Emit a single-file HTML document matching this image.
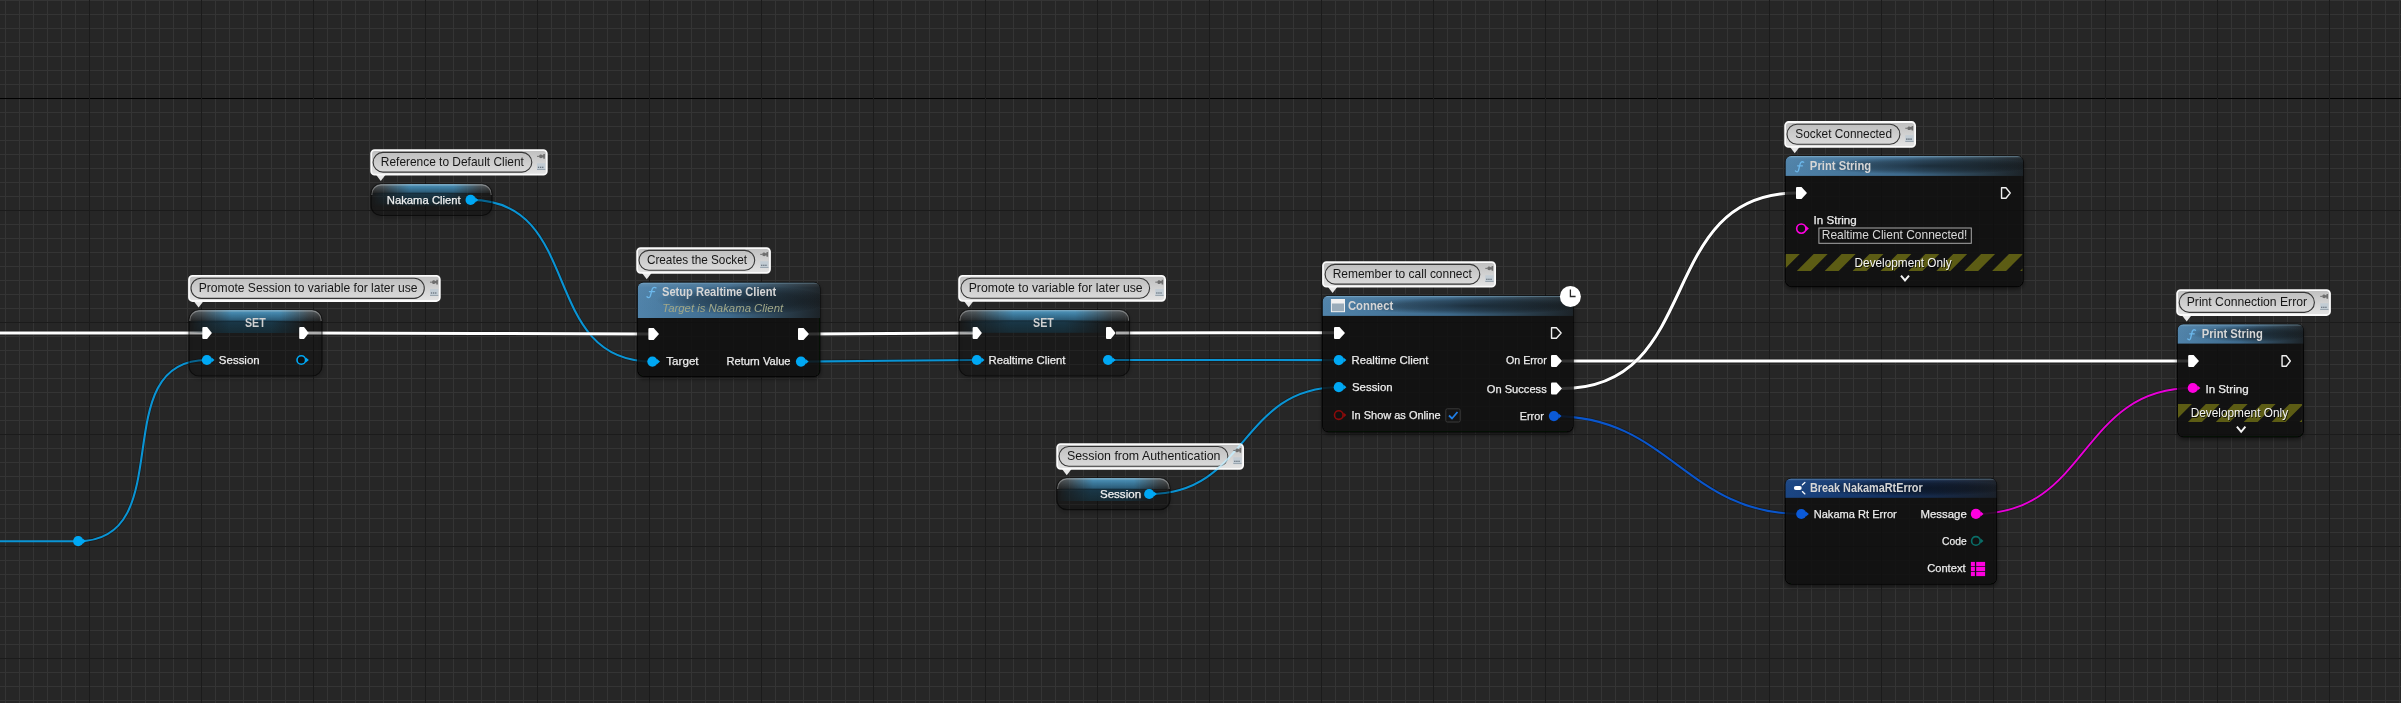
<!DOCTYPE html>
<html><head><meta charset="utf-8"><title>Blueprint</title>
<style>html,body{margin:0;padding:0;background:#262626;overflow:hidden;width:2401px;height:703px}
svg{display:block;font-family:"Liberation Sans",sans-serif;will-change:transform}</style></head>
<body><svg width="2401" height="703" viewBox="0 0 2401 703"><defs>
<linearGradient id="bubG" x1="0" y1="0" x2="0" y2="1">
 <stop offset="0" stop-color="#bfbfbf"/><stop offset="1" stop-color="#e4e4e4"/>
</linearGradient>
<linearGradient id="pillG" x1="0" y1="0" x2="0" y2="1">
 <stop offset="0" stop-color="#c0c0c0"/><stop offset="1" stop-color="#dadada"/>
</linearGradient>
<linearGradient id="funcH" x1="0" y1="0" x2="1" y2="0">
 <stop offset="0" stop-color="#5083aa"/><stop offset="0.5" stop-color="#3e6a8c"/><stop offset="0.8" stop-color="#2a3f4e"/><stop offset="1" stop-color="#1c2328"/>
</linearGradient>
<linearGradient id="funcV" x1="0" y1="0" x2="0" y2="1">
 <stop offset="0" stop-color="#ffffff" stop-opacity="0.12"/><stop offset="0.15" stop-color="#ffffff" stop-opacity="0.02"/><stop offset="1" stop-color="#000000" stop-opacity="0"/>
</linearGradient>
<radialGradient id="funcBlob" cx="0.55" cy="0.5" r="0.5">
 <stop offset="0" stop-color="#000000" stop-opacity="0.5"/><stop offset="0.6" stop-color="#000000" stop-opacity="0.3"/><stop offset="1" stop-color="#000000" stop-opacity="0"/>
</radialGradient>
<linearGradient id="breakH" x1="0" y1="0" x2="1" y2="0">
 <stop offset="0" stop-color="#1b4684"/><stop offset="0.5" stop-color="#13305f"/><stop offset="1" stop-color="#1a2029"/>
</linearGradient>
<radialGradient id="varGlow" cx="0.5" cy="0" r="0.5" gradientTransform="translate(0,0) scale(1,1)">
 <stop offset="0" stop-color="#4aa3d6" stop-opacity="0.95"/><stop offset="0.6" stop-color="#2a6f98" stop-opacity="0.6"/><stop offset="1" stop-color="#1a3a50" stop-opacity="0"/>
</radialGradient>
<linearGradient id="glossV" x1="0" y1="0" x2="0" y2="1">
 <stop offset="0" stop-color="#ffffff" stop-opacity="0.28"/><stop offset="1" stop-color="#ffffff" stop-opacity="0.04"/>
</linearGradient>
<linearGradient id="varBright" x1="0" y1="0" x2="0" y2="1">
 <stop offset="0" stop-color="#52a6d4"/><stop offset="0.5" stop-color="#3a82ab"/><stop offset="1" stop-color="#2a5f7e"/>
</linearGradient>
<linearGradient id="varDark" x1="0" y1="0" x2="0" y2="1">
 <stop offset="0" stop-color="#1a3a4c" stop-opacity="0.95"/><stop offset="1" stop-color="#16303c" stop-opacity="0.8"/>
</linearGradient>
<linearGradient id="varDarkFade" x1="0" y1="0" x2="0" y2="1">
 <stop offset="0" stop-color="#1a3a4c" stop-opacity="0.95"/><stop offset="0.7" stop-color="#16303c" stop-opacity="0.7"/><stop offset="1" stop-color="#16303c" stop-opacity="0"/>
</linearGradient>
<linearGradient id="hmaskA" x1="0" y1="0" x2="1" y2="0">
 <stop offset="0" stop-color="#000"/><stop offset="0.1" stop-color="#222"/><stop offset="0.32" stop-color="#eee"/><stop offset="0.68" stop-color="#eee"/><stop offset="0.9" stop-color="#222"/><stop offset="1" stop-color="#000"/>
</linearGradient>
<linearGradient id="hmaskB" x1="0" y1="0" x2="1" y2="0">
 <stop offset="0" stop-color="#000"/><stop offset="0.08" stop-color="#555"/><stop offset="0.3" stop-color="#fff"/><stop offset="0.62" stop-color="#fff"/><stop offset="0.88" stop-color="#000"/><stop offset="1" stop-color="#000"/>
</linearGradient>
<pattern id="stripes" patternUnits="userSpaceOnUse" width="27.9" height="27.9" patternTransform="skewX(-45)">
 <rect x="0" y="0" width="14" height="27.9" fill="#5b5b12"/>
</pattern>
<filter id="shadow" x="-10%" y="-20%" width="120%" height="150%">
 <feGaussianBlur in="SourceAlpha" stdDeviation="2"/><feOffset dx="0" dy="1.5"/>
 <feComponentTransfer><feFuncA type="linear" slope="0.6"/></feComponentTransfer>
 <feMerge><feMergeNode/><feMergeNode in="SourceGraphic"/></feMerge>
</filter>
</defs>
<rect x="0" y="0" width="2401" height="703" fill="#262626"/>
<g shape-rendering="crispEdges"><rect x="0" y="0" width="2401" height="1" fill="#343434"/><rect x="0" y="14" width="2401" height="1" fill="#343434"/><rect x="0" y="28" width="2401" height="1" fill="#343434"/><rect x="0" y="42" width="2401" height="1" fill="#343434"/><rect x="0" y="56" width="2401" height="1" fill="#343434"/><rect x="0" y="70" width="2401" height="1" fill="#343434"/><rect x="0" y="84" width="2401" height="1" fill="#343434"/><rect x="0" y="98" width="2401" height="1" fill="#343434"/><rect x="0" y="112" width="2401" height="1" fill="#343434"/><rect x="0" y="126" width="2401" height="1" fill="#343434"/><rect x="0" y="140" width="2401" height="1" fill="#343434"/><rect x="0" y="154" width="2401" height="1" fill="#343434"/><rect x="0" y="168" width="2401" height="1" fill="#343434"/><rect x="0" y="182" width="2401" height="1" fill="#343434"/><rect x="0" y="196" width="2401" height="1" fill="#343434"/><rect x="0" y="210" width="2401" height="1" fill="#343434"/><rect x="0" y="224" width="2401" height="1" fill="#343434"/><rect x="0" y="238" width="2401" height="1" fill="#343434"/><rect x="0" y="252" width="2401" height="1" fill="#343434"/><rect x="0" y="266" width="2401" height="1" fill="#343434"/><rect x="0" y="280" width="2401" height="1" fill="#343434"/><rect x="0" y="294" width="2401" height="1" fill="#343434"/><rect x="0" y="308" width="2401" height="1" fill="#343434"/><rect x="0" y="322" width="2401" height="1" fill="#343434"/><rect x="0" y="336" width="2401" height="1" fill="#343434"/><rect x="0" y="350" width="2401" height="1" fill="#343434"/><rect x="0" y="364" width="2401" height="1" fill="#343434"/><rect x="0" y="378" width="2401" height="1" fill="#343434"/><rect x="0" y="392" width="2401" height="1" fill="#343434"/><rect x="0" y="406" width="2401" height="1" fill="#343434"/><rect x="0" y="420" width="2401" height="1" fill="#343434"/><rect x="0" y="434" width="2401" height="1" fill="#343434"/><rect x="0" y="448" width="2401" height="1" fill="#343434"/><rect x="0" y="462" width="2401" height="1" fill="#343434"/><rect x="0" y="476" width="2401" height="1" fill="#343434"/><rect x="0" y="490" width="2401" height="1" fill="#343434"/><rect x="0" y="504" width="2401" height="1" fill="#343434"/><rect x="0" y="518" width="2401" height="1" fill="#343434"/><rect x="0" y="532" width="2401" height="1" fill="#343434"/><rect x="0" y="546" width="2401" height="1" fill="#343434"/><rect x="0" y="560" width="2401" height="1" fill="#343434"/><rect x="0" y="574" width="2401" height="1" fill="#343434"/><rect x="0" y="588" width="2401" height="1" fill="#343434"/><rect x="0" y="602" width="2401" height="1" fill="#343434"/><rect x="0" y="616" width="2401" height="1" fill="#343434"/><rect x="0" y="630" width="2401" height="1" fill="#343434"/><rect x="0" y="644" width="2401" height="1" fill="#343434"/><rect x="0" y="658" width="2401" height="1" fill="#343434"/><rect x="0" y="672" width="2401" height="1" fill="#343434"/><rect x="0" y="686" width="2401" height="1" fill="#343434"/><rect x="0" y="700" width="2401" height="1" fill="#343434"/><rect x="5" y="0" width="1" height="703" fill="#343434"/><rect x="19" y="0" width="1" height="703" fill="#343434"/><rect x="33" y="0" width="1" height="703" fill="#343434"/><rect x="47" y="0" width="1" height="703" fill="#343434"/><rect x="61" y="0" width="1" height="703" fill="#343434"/><rect x="75" y="0" width="1" height="703" fill="#343434"/><rect x="89" y="0" width="1" height="703" fill="#343434"/><rect x="103" y="0" width="1" height="703" fill="#343434"/><rect x="117" y="0" width="1" height="703" fill="#343434"/><rect x="131" y="0" width="1" height="703" fill="#343434"/><rect x="145" y="0" width="1" height="703" fill="#343434"/><rect x="159" y="0" width="1" height="703" fill="#343434"/><rect x="173" y="0" width="1" height="703" fill="#343434"/><rect x="187" y="0" width="1" height="703" fill="#343434"/><rect x="201" y="0" width="1" height="703" fill="#343434"/><rect x="215" y="0" width="1" height="703" fill="#343434"/><rect x="229" y="0" width="1" height="703" fill="#343434"/><rect x="243" y="0" width="1" height="703" fill="#343434"/><rect x="257" y="0" width="1" height="703" fill="#343434"/><rect x="271" y="0" width="1" height="703" fill="#343434"/><rect x="285" y="0" width="1" height="703" fill="#343434"/><rect x="299" y="0" width="1" height="703" fill="#343434"/><rect x="313" y="0" width="1" height="703" fill="#343434"/><rect x="327" y="0" width="1" height="703" fill="#343434"/><rect x="341" y="0" width="1" height="703" fill="#343434"/><rect x="355" y="0" width="1" height="703" fill="#343434"/><rect x="369" y="0" width="1" height="703" fill="#343434"/><rect x="383" y="0" width="1" height="703" fill="#343434"/><rect x="397" y="0" width="1" height="703" fill="#343434"/><rect x="411" y="0" width="1" height="703" fill="#343434"/><rect x="425" y="0" width="1" height="703" fill="#343434"/><rect x="439" y="0" width="1" height="703" fill="#343434"/><rect x="453" y="0" width="1" height="703" fill="#343434"/><rect x="467" y="0" width="1" height="703" fill="#343434"/><rect x="481" y="0" width="1" height="703" fill="#343434"/><rect x="495" y="0" width="1" height="703" fill="#343434"/><rect x="509" y="0" width="1" height="703" fill="#343434"/><rect x="523" y="0" width="1" height="703" fill="#343434"/><rect x="537" y="0" width="1" height="703" fill="#343434"/><rect x="551" y="0" width="1" height="703" fill="#343434"/><rect x="565" y="0" width="1" height="703" fill="#343434"/><rect x="579" y="0" width="1" height="703" fill="#343434"/><rect x="593" y="0" width="1" height="703" fill="#343434"/><rect x="607" y="0" width="1" height="703" fill="#343434"/><rect x="621" y="0" width="1" height="703" fill="#343434"/><rect x="635" y="0" width="1" height="703" fill="#343434"/><rect x="649" y="0" width="1" height="703" fill="#343434"/><rect x="663" y="0" width="1" height="703" fill="#343434"/><rect x="677" y="0" width="1" height="703" fill="#343434"/><rect x="691" y="0" width="1" height="703" fill="#343434"/><rect x="705" y="0" width="1" height="703" fill="#343434"/><rect x="719" y="0" width="1" height="703" fill="#343434"/><rect x="733" y="0" width="1" height="703" fill="#343434"/><rect x="747" y="0" width="1" height="703" fill="#343434"/><rect x="761" y="0" width="1" height="703" fill="#343434"/><rect x="775" y="0" width="1" height="703" fill="#343434"/><rect x="789" y="0" width="1" height="703" fill="#343434"/><rect x="803" y="0" width="1" height="703" fill="#343434"/><rect x="817" y="0" width="1" height="703" fill="#343434"/><rect x="831" y="0" width="1" height="703" fill="#343434"/><rect x="845" y="0" width="1" height="703" fill="#343434"/><rect x="859" y="0" width="1" height="703" fill="#343434"/><rect x="873" y="0" width="1" height="703" fill="#343434"/><rect x="887" y="0" width="1" height="703" fill="#343434"/><rect x="901" y="0" width="1" height="703" fill="#343434"/><rect x="915" y="0" width="1" height="703" fill="#343434"/><rect x="929" y="0" width="1" height="703" fill="#343434"/><rect x="943" y="0" width="1" height="703" fill="#343434"/><rect x="957" y="0" width="1" height="703" fill="#343434"/><rect x="971" y="0" width="1" height="703" fill="#343434"/><rect x="985" y="0" width="1" height="703" fill="#343434"/><rect x="999" y="0" width="1" height="703" fill="#343434"/><rect x="1013" y="0" width="1" height="703" fill="#343434"/><rect x="1027" y="0" width="1" height="703" fill="#343434"/><rect x="1041" y="0" width="1" height="703" fill="#343434"/><rect x="1055" y="0" width="1" height="703" fill="#343434"/><rect x="1069" y="0" width="1" height="703" fill="#343434"/><rect x="1083" y="0" width="1" height="703" fill="#343434"/><rect x="1097" y="0" width="1" height="703" fill="#343434"/><rect x="1111" y="0" width="1" height="703" fill="#343434"/><rect x="1125" y="0" width="1" height="703" fill="#343434"/><rect x="1139" y="0" width="1" height="703" fill="#343434"/><rect x="1153" y="0" width="1" height="703" fill="#343434"/><rect x="1167" y="0" width="1" height="703" fill="#343434"/><rect x="1181" y="0" width="1" height="703" fill="#343434"/><rect x="1195" y="0" width="1" height="703" fill="#343434"/><rect x="1209" y="0" width="1" height="703" fill="#343434"/><rect x="1223" y="0" width="1" height="703" fill="#343434"/><rect x="1237" y="0" width="1" height="703" fill="#343434"/><rect x="1251" y="0" width="1" height="703" fill="#343434"/><rect x="1265" y="0" width="1" height="703" fill="#343434"/><rect x="1279" y="0" width="1" height="703" fill="#343434"/><rect x="1293" y="0" width="1" height="703" fill="#343434"/><rect x="1307" y="0" width="1" height="703" fill="#343434"/><rect x="1321" y="0" width="1" height="703" fill="#343434"/><rect x="1335" y="0" width="1" height="703" fill="#343434"/><rect x="1349" y="0" width="1" height="703" fill="#343434"/><rect x="1363" y="0" width="1" height="703" fill="#343434"/><rect x="1377" y="0" width="1" height="703" fill="#343434"/><rect x="1391" y="0" width="1" height="703" fill="#343434"/><rect x="1405" y="0" width="1" height="703" fill="#343434"/><rect x="1419" y="0" width="1" height="703" fill="#343434"/><rect x="1433" y="0" width="1" height="703" fill="#343434"/><rect x="1447" y="0" width="1" height="703" fill="#343434"/><rect x="1461" y="0" width="1" height="703" fill="#343434"/><rect x="1475" y="0" width="1" height="703" fill="#343434"/><rect x="1489" y="0" width="1" height="703" fill="#343434"/><rect x="1503" y="0" width="1" height="703" fill="#343434"/><rect x="1517" y="0" width="1" height="703" fill="#343434"/><rect x="1531" y="0" width="1" height="703" fill="#343434"/><rect x="1545" y="0" width="1" height="703" fill="#343434"/><rect x="1559" y="0" width="1" height="703" fill="#343434"/><rect x="1573" y="0" width="1" height="703" fill="#343434"/><rect x="1587" y="0" width="1" height="703" fill="#343434"/><rect x="1601" y="0" width="1" height="703" fill="#343434"/><rect x="1615" y="0" width="1" height="703" fill="#343434"/><rect x="1629" y="0" width="1" height="703" fill="#343434"/><rect x="1643" y="0" width="1" height="703" fill="#343434"/><rect x="1657" y="0" width="1" height="703" fill="#343434"/><rect x="1671" y="0" width="1" height="703" fill="#343434"/><rect x="1685" y="0" width="1" height="703" fill="#343434"/><rect x="1699" y="0" width="1" height="703" fill="#343434"/><rect x="1713" y="0" width="1" height="703" fill="#343434"/><rect x="1727" y="0" width="1" height="703" fill="#343434"/><rect x="1741" y="0" width="1" height="703" fill="#343434"/><rect x="1755" y="0" width="1" height="703" fill="#343434"/><rect x="1769" y="0" width="1" height="703" fill="#343434"/><rect x="1783" y="0" width="1" height="703" fill="#343434"/><rect x="1797" y="0" width="1" height="703" fill="#343434"/><rect x="1811" y="0" width="1" height="703" fill="#343434"/><rect x="1825" y="0" width="1" height="703" fill="#343434"/><rect x="1839" y="0" width="1" height="703" fill="#343434"/><rect x="1853" y="0" width="1" height="703" fill="#343434"/><rect x="1867" y="0" width="1" height="703" fill="#343434"/><rect x="1881" y="0" width="1" height="703" fill="#343434"/><rect x="1895" y="0" width="1" height="703" fill="#343434"/><rect x="1909" y="0" width="1" height="703" fill="#343434"/><rect x="1923" y="0" width="1" height="703" fill="#343434"/><rect x="1937" y="0" width="1" height="703" fill="#343434"/><rect x="1951" y="0" width="1" height="703" fill="#343434"/><rect x="1965" y="0" width="1" height="703" fill="#343434"/><rect x="1979" y="0" width="1" height="703" fill="#343434"/><rect x="1993" y="0" width="1" height="703" fill="#343434"/><rect x="2007" y="0" width="1" height="703" fill="#343434"/><rect x="2021" y="0" width="1" height="703" fill="#343434"/><rect x="2035" y="0" width="1" height="703" fill="#343434"/><rect x="2049" y="0" width="1" height="703" fill="#343434"/><rect x="2063" y="0" width="1" height="703" fill="#343434"/><rect x="2077" y="0" width="1" height="703" fill="#343434"/><rect x="2091" y="0" width="1" height="703" fill="#343434"/><rect x="2105" y="0" width="1" height="703" fill="#343434"/><rect x="2119" y="0" width="1" height="703" fill="#343434"/><rect x="2133" y="0" width="1" height="703" fill="#343434"/><rect x="2147" y="0" width="1" height="703" fill="#343434"/><rect x="2161" y="0" width="1" height="703" fill="#343434"/><rect x="2175" y="0" width="1" height="703" fill="#343434"/><rect x="2189" y="0" width="1" height="703" fill="#343434"/><rect x="2203" y="0" width="1" height="703" fill="#343434"/><rect x="2217" y="0" width="1" height="703" fill="#343434"/><rect x="2231" y="0" width="1" height="703" fill="#343434"/><rect x="2245" y="0" width="1" height="703" fill="#343434"/><rect x="2259" y="0" width="1" height="703" fill="#343434"/><rect x="2273" y="0" width="1" height="703" fill="#343434"/><rect x="2287" y="0" width="1" height="703" fill="#343434"/><rect x="2301" y="0" width="1" height="703" fill="#343434"/><rect x="2315" y="0" width="1" height="703" fill="#343434"/><rect x="2329" y="0" width="1" height="703" fill="#343434"/><rect x="2343" y="0" width="1" height="703" fill="#343434"/><rect x="2357" y="0" width="1" height="703" fill="#343434"/><rect x="2371" y="0" width="1" height="703" fill="#343434"/><rect x="2385" y="0" width="1" height="703" fill="#343434"/><rect x="2399" y="0" width="1" height="703" fill="#343434"/><rect x="0" y="98" width="2401" height="1" fill="#000000"/><rect x="0" y="210" width="2401" height="1" fill="#1b1b1b"/><rect x="0" y="322" width="2401" height="1" fill="#1b1b1b"/><rect x="0" y="434" width="2401" height="1" fill="#1b1b1b"/><rect x="0" y="546" width="2401" height="1" fill="#1b1b1b"/><rect x="0" y="658" width="2401" height="1" fill="#1b1b1b"/><rect x="89" y="0" width="1" height="703" fill="#1b1b1b"/><rect x="201" y="0" width="1" height="703" fill="#1b1b1b"/><rect x="313" y="0" width="1" height="703" fill="#1b1b1b"/><rect x="425" y="0" width="1" height="703" fill="#1b1b1b"/><rect x="537" y="0" width="1" height="703" fill="#1b1b1b"/><rect x="649" y="0" width="1" height="703" fill="#1b1b1b"/><rect x="761" y="0" width="1" height="703" fill="#1b1b1b"/><rect x="873" y="0" width="1" height="703" fill="#1b1b1b"/><rect x="985" y="0" width="1" height="703" fill="#1b1b1b"/><rect x="1097" y="0" width="1" height="703" fill="#1b1b1b"/><rect x="1209" y="0" width="1" height="703" fill="#1b1b1b"/><rect x="1321" y="0" width="1" height="703" fill="#1b1b1b"/><rect x="1433" y="0" width="1" height="703" fill="#1b1b1b"/><rect x="1545" y="0" width="1" height="703" fill="#1b1b1b"/><rect x="1657" y="0" width="1" height="703" fill="#1b1b1b"/><rect x="1769" y="0" width="1" height="703" fill="#1b1b1b"/><rect x="1881" y="0" width="1" height="703" fill="#1b1b1b"/><rect x="1993" y="0" width="1" height="703" fill="#1b1b1b"/><rect x="2105" y="0" width="1" height="703" fill="#1b1b1b"/><rect x="2217" y="0" width="1" height="703" fill="#1b1b1b"/><rect x="2329" y="0" width="1" height="703" fill="#1b1b1b"/></g>
<path d="M0,541.2 L78,541.2" fill="none" stroke="#0a94d4" stroke-width="2.1"/>
<path d="M78.00,541.20 C181.40,541.20 103.60,360.00 207.00,360.00" fill="none" stroke="rgba(0,0,0,0.28)" stroke-width="3.5"/>
<path d="M78.00,541.20 C181.40,541.20 103.60,360.00 207.00,360.00" fill="none" stroke="#0a94d4" stroke-width="2.1"/>
<path d="M470.60,199.90 C585.10,199.90 537.90,361.60 652.40,361.60" fill="none" stroke="rgba(0,0,0,0.28)" stroke-width="3.5"/>
<path d="M470.60,199.90 C585.10,199.90 537.90,361.60 652.40,361.60" fill="none" stroke="#0a94d4" stroke-width="2.1"/>
<path d="M801.00,361.60 C860.20,361.60 917.80,360.00 977.00,360.00" fill="none" stroke="rgba(0,0,0,0.28)" stroke-width="3.5"/>
<path d="M801.00,361.60 C860.20,361.60 917.80,360.00 977.00,360.00" fill="none" stroke="#0a94d4" stroke-width="2.1"/>
<path d="M1108.00,360.00 C1185.03,360.00 1261.97,360.10 1339.00,360.10" fill="none" stroke="rgba(0,0,0,0.28)" stroke-width="3.5"/>
<path d="M1108.00,360.00 C1185.03,360.00 1261.97,360.10 1339.00,360.10" fill="none" stroke="#0a94d4" stroke-width="2.1"/>
<path d="M1149.20,494.00 C1248.00,494.00 1240.00,387.20 1338.80,387.20" fill="none" stroke="rgba(0,0,0,0.28)" stroke-width="3.5"/>
<path d="M1149.20,494.00 C1248.00,494.00 1240.00,387.20 1338.80,387.20" fill="none" stroke="#0a94d4" stroke-width="2.1"/>
<path d="M1553.90,416.10 C1669.00,416.10 1686.20,514.00 1801.30,514.00" fill="none" stroke="rgba(0,0,0,0.28)" stroke-width="3.5"/>
<path d="M1553.90,416.10 C1669.00,416.10 1686.20,514.00 1801.30,514.00" fill="none" stroke="#0a56cc" stroke-width="2.1"/>
<path d="M1975.90,513.90 C2090.17,513.90 2078.53,388.00 2192.80,388.00" fill="none" stroke="rgba(0,0,0,0.28)" stroke-width="3.3"/>
<path d="M1975.90,513.90 C2090.17,513.90 2078.53,388.00 2192.80,388.00" fill="none" stroke="#e800d8" stroke-width="1.9"/>
<path d="M-5.00,333.00 C64.33,333.00 133.67,333.00 203.00,333.00" fill="none" stroke="rgba(0,0,0,0.28)" stroke-width="4.4"/>
<path d="M-5.00,333.00 C64.33,333.00 133.67,333.00 203.00,333.00" fill="none" stroke="#ffffff" stroke-width="3"/>
<path d="M308.00,333.00 C422.00,333.00 535.00,334.00 649.00,334.00" fill="none" stroke="rgba(0,0,0,0.28)" stroke-width="4.4"/>
<path d="M308.00,333.00 C422.00,333.00 535.00,334.00 649.00,334.00" fill="none" stroke="#ffffff" stroke-width="3"/>
<path d="M809.00,334.00 C864.00,334.00 918.00,333.00 973.00,333.00" fill="none" stroke="rgba(0,0,0,0.28)" stroke-width="4.4"/>
<path d="M809.00,334.00 C864.00,334.00 918.00,333.00 973.00,333.00" fill="none" stroke="#ffffff" stroke-width="3"/>
<path d="M1116.00,333.00 C1189.10,333.00 1261.90,332.70 1335.00,332.70" fill="none" stroke="rgba(0,0,0,0.28)" stroke-width="4.4"/>
<path d="M1116.00,333.00 C1189.10,333.00 1261.90,332.70 1335.00,332.70" fill="none" stroke="#ffffff" stroke-width="3"/>
<path d="M1562.00,361.00 C1771.00,361.00 1980.00,361.00 2189.00,361.00" fill="none" stroke="rgba(0,0,0,0.28)" stroke-width="4.4"/>
<path d="M1562.00,361.00 C1771.00,361.00 1980.00,361.00 2189.00,361.00" fill="none" stroke="#ffffff" stroke-width="3"/>
<path d="M1562.00,388.50 C1705.50,388.50 1653.50,193.00 1797.00,193.00" fill="none" stroke="rgba(0,0,0,0.28)" stroke-width="4.4"/>
<path d="M1562.00,388.50 C1705.50,388.50 1653.50,193.00 1797.00,193.00" fill="none" stroke="#ffffff" stroke-width="3"/>
<path d="M82.80,538.60 L85.80,541.20 L82.80,543.80 Z" fill="#00a8f4"/>
<circle cx="78.20" cy="541.20" r="5.10" fill="#00a8f4"/>
<g filter="url(#shadow)">
<rect x="189.00" y="310.00" width="133.00" height="66.00" rx="10" fill="rgba(0,0,0,0.22)" stroke="rgba(0,0,0,0.6)" stroke-width="1.2"/>
</g>
<clipPath id="c189_310"><rect x="189.00" y="310.00" width="133.00" height="66.00" rx="10"/></clipPath>
<mask id="m189_310a" maskUnits="userSpaceOnUse" x="189" y="310" width="133" height="66"><rect x="189.00" y="310.00" width="133.00" height="66.00" fill="url(#hmaskA)"/></mask>
<mask id="m189_310b" maskUnits="userSpaceOnUse" x="189" y="310" width="133" height="66"><rect x="189.00" y="310.00" width="133.00" height="66.00" fill="url(#hmaskB)"/></mask>
<g clip-path="url(#c189_310)">
<rect x="189.00" y="310.00" width="133.00" height="11.00" fill="url(#glossV)"/>
<rect x="189.00" y="310.00" width="133.00" height="11.00" fill="url(#varBright)" fill-opacity="0.9" mask="url(#m189_310a)"/>
<rect x="189.00" y="321.00" width="133.00" height="12.00" fill="url(#varDark)" mask="url(#m189_310b)"/>
<rect x="189.00" y="320.40" width="133.00" height="1.2" fill="rgba(0,0,0,0.25)" mask="url(#m189_310b)"/>
<path d="M189.90,321.00 L189.90,320.00 A9.1,9.1 0 0 1 199.00,310.90 L312.00,310.90 A9.1,9.1 0 0 1 321.10,320.00 L321.10,321.00" fill="none" stroke="rgba(215,215,215,0.38)" stroke-width="1.1"/>
</g>
<text x="244.98" y="326.90" font-size="12.3" font-weight="bold" font-style="normal" fill="#d0d0d0" textLength="20.73" lengthAdjust="spacingAndGlyphs"  >SET</text>
<path d="M203.30,327.00 L207.10,327.00 L211.90,333.00 L207.10,339.00 L203.30,339.00 Q202.30,339.00 202.30,338.00 L202.30,328.00 Q202.30,327.00 203.30,327.00 Z" fill="#ffffff"/>
<path d="M300.20,327.00 L304.00,327.00 L308.80,333.00 L304.00,339.00 L300.20,339.00 Q299.20,339.00 299.20,338.00 L299.20,328.00 Q299.20,327.00 300.20,327.00 Z" fill="#ffffff"/>
<path d="M211.50,357.40 L214.50,360.00 L211.50,362.60 Z" fill="#00a8f4"/>
<circle cx="206.90" cy="360.00" r="5.10" fill="#00a8f4"/>
<text x="218.88" y="363.70" font-size="11.2" font-weight="normal" font-style="normal" fill="#ececec" textLength="40.79" lengthAdjust="spacingAndGlyphs" stroke="#ececec" stroke-width="0.25" >Session</text>
<path d="M305.90,357.40 L308.90,360.00 L305.90,362.60 Z" fill="#00a8f4"/>
<circle cx="301.30" cy="360.00" r="4.30" fill="#111" stroke="#00a8f4" stroke-width="1.6"/>
<g filter="url(#shadow)">
<rect x="371.00" y="184.00" width="121.00" height="31.50" rx="10" fill="rgba(0,0,0,0.22)" stroke="rgba(0,0,0,0.6)" stroke-width="1.2"/>
</g>
<clipPath id="c371_184"><rect x="371.00" y="184.00" width="121.00" height="31.50" rx="10"/></clipPath>
<mask id="m371_184a" maskUnits="userSpaceOnUse" x="371" y="184" width="121" height="31.5"><rect x="371.00" y="184.00" width="121.00" height="31.50" fill="url(#hmaskA)"/></mask>
<mask id="m371_184b" maskUnits="userSpaceOnUse" x="371" y="184" width="121" height="31.5"><rect x="371.00" y="184.00" width="121.00" height="31.50" fill="url(#hmaskB)"/></mask>
<g clip-path="url(#c371_184)">
<rect x="371.00" y="184.00" width="121.00" height="9.00" fill="url(#glossV)"/>
<rect x="371.00" y="184.00" width="121.00" height="9.00" fill="url(#varBright)" fill-opacity="0.9" mask="url(#m371_184a)"/>
<rect x="371.00" y="193.00" width="121.00" height="14.00" fill="url(#varDarkFade)" mask="url(#m371_184b)"/>
<rect x="371.00" y="192.40" width="121.00" height="1.2" fill="rgba(0,0,0,0.25)" mask="url(#m371_184b)"/>
<path d="M371.90,195.00 L371.90,194.00 A9.1,9.1 0 0 1 381.00,184.90 L482.00,184.90 A9.1,9.1 0 0 1 491.10,194.00 L491.10,195.00" fill="none" stroke="rgba(215,215,215,0.38)" stroke-width="1.1"/>
</g>
<text x="386.80" y="203.70" font-size="11.2" font-weight="normal" font-style="normal" fill="#f0f0f0" textLength="73.89" lengthAdjust="spacingAndGlyphs" stroke="#f0f0f0" stroke-width="0.25" >Nakama Client</text>
<path d="M475.20,197.30 L478.20,199.90 L475.20,202.50 Z" fill="#00a8f4"/>
<circle cx="470.60" cy="199.90" r="5.10" fill="#00a8f4"/>
<g filter="url(#shadow)">
<rect x="637.60" y="282.40" width="182.40" height="94.20" rx="6" fill="rgba(13,15,13,0.74)" stroke="rgba(0,0,0,0.7)" stroke-width="1"/>
</g>
<clipPath id="h637_282"><rect x="637.60" y="282.40" width="182.40" height="94.20" rx="6"/></clipPath>
<g clip-path="url(#h637_282)">
<rect x="637.60" y="282.40" width="182.40" height="35.60" fill="url(#funcH)"/>
<rect x="637.60" y="282.40" width="182.40" height="35.60" fill="url(#funcV)"/>
<ellipse cx="737.92" cy="300.20" rx="91.20" ry="14.95" fill="url(#funcBlob)"/>
<rect x="637.60" y="282.40" width="182.40" height="1.2" fill="rgba(150,200,230,0.35)"/>
</g>
<path d="M656.02,287.86 C653.65,286.46 652.23,288.08 651.75,290.78 L650.33,296.18 C649.85,298.02 648.14,298.02 647.00,296.72 M649.38,291.54 L654.60,291.54" fill="none" stroke="#6cb8ec" stroke-width="1.3" stroke-linecap="round"/>
<text x="661.97" y="296.00" font-size="12.3" font-weight="bold" font-style="normal" fill="#d6d6d6" textLength="114.20" lengthAdjust="spacingAndGlyphs"  >Setup Realtime Client</text>
<text x="662.28" y="311.90" font-size="10.7" font-weight="normal" font-style="italic" fill="#a2a888" textLength="120.92" lengthAdjust="spacingAndGlyphs"  >Target is Nakama Client</text>
<path d="M649.40,328.00 L653.70,328.00 L659.00,334.00 L653.70,340.00 L649.40,340.00 Q648.40,340.00 648.40,339.00 L648.40,329.00 Q648.40,328.00 649.40,328.00 Z" fill="#ffffff"/>
<path d="M799.00,328.00 L803.50,328.00 L809.00,334.00 L803.50,340.00 L799.00,340.00 Q798.00,340.00 798.00,339.00 L798.00,329.00 Q798.00,328.00 799.00,328.00 Z" fill="#ffffff"/>
<path d="M657.00,359.00 L660.00,361.60 L657.00,364.20 Z" fill="#00a8f4"/>
<circle cx="652.40" cy="361.60" r="5.10" fill="#00a8f4"/>
<text x="666.27" y="365.00" font-size="11.2" font-weight="normal" font-style="normal" fill="#ececec" textLength="32.34" lengthAdjust="spacingAndGlyphs" stroke="#ececec" stroke-width="0.25" >Target</text>
<text x="726.41" y="365.00" font-size="11.2" font-weight="normal" font-style="normal" fill="#ececec" textLength="64.12" lengthAdjust="spacingAndGlyphs" stroke="#ececec" stroke-width="0.25" >Return Value</text>
<path d="M805.60,359.00 L808.60,361.60 L805.60,364.20 Z" fill="#00a8f4"/>
<circle cx="801.00" cy="361.60" r="5.10" fill="#00a8f4"/>
<g filter="url(#shadow)">
<rect x="959.10" y="309.80" width="170.40" height="66.20" rx="10" fill="rgba(0,0,0,0.22)" stroke="rgba(0,0,0,0.6)" stroke-width="1.2"/>
</g>
<clipPath id="c959_309"><rect x="959.10" y="309.80" width="170.40" height="66.20" rx="10"/></clipPath>
<mask id="m959_309a" maskUnits="userSpaceOnUse" x="959.1" y="309.8" width="170.39999999999998" height="66.19999999999999"><rect x="959.10" y="309.80" width="170.40" height="66.20" fill="url(#hmaskA)"/></mask>
<mask id="m959_309b" maskUnits="userSpaceOnUse" x="959.1" y="309.8" width="170.39999999999998" height="66.19999999999999"><rect x="959.10" y="309.80" width="170.40" height="66.20" fill="url(#hmaskB)"/></mask>
<g clip-path="url(#c959_309)">
<rect x="959.10" y="309.80" width="170.40" height="11.00" fill="url(#glossV)"/>
<rect x="959.10" y="309.80" width="170.40" height="11.00" fill="url(#varBright)" fill-opacity="0.9" mask="url(#m959_309a)"/>
<rect x="959.10" y="320.80" width="170.40" height="12.00" fill="url(#varDark)" mask="url(#m959_309b)"/>
<rect x="959.10" y="320.20" width="170.40" height="1.2" fill="rgba(0,0,0,0.25)" mask="url(#m959_309b)"/>
<path d="M960.00,320.80 L960.00,319.80 A9.1,9.1 0 0 1 969.10,310.70 L1119.50,310.70 A9.1,9.1 0 0 1 1128.60,319.80 L1128.60,320.80" fill="none" stroke="rgba(215,215,215,0.38)" stroke-width="1.1"/>
</g>
<text x="1033.08" y="326.90" font-size="12.3" font-weight="bold" font-style="normal" fill="#d0d0d0" textLength="20.73" lengthAdjust="spacingAndGlyphs"  >SET</text>
<path d="M973.60,327.00 L977.25,327.00 L981.90,333.00 L977.25,339.00 L973.60,339.00 Q972.60,339.00 972.60,338.00 L972.60,328.00 Q972.60,327.00 973.60,327.00 Z" fill="#ffffff"/>
<path d="M1107.00,327.00 L1110.80,327.00 L1115.60,333.00 L1110.80,339.00 L1107.00,339.00 Q1106.00,339.00 1106.00,338.00 L1106.00,328.00 Q1106.00,327.00 1107.00,327.00 Z" fill="#ffffff"/>
<path d="M981.50,357.40 L984.50,360.00 L981.50,362.60 Z" fill="#00a8f4"/>
<circle cx="976.90" cy="360.00" r="5.10" fill="#00a8f4"/>
<text x="988.49" y="363.70" font-size="11.2" font-weight="normal" font-style="normal" fill="#ececec" textLength="76.97" lengthAdjust="spacingAndGlyphs" stroke="#ececec" stroke-width="0.25" >Realtime Client</text>
<path d="M1112.70,357.40 L1115.70,360.00 L1112.70,362.60 Z" fill="#00a8f4"/>
<circle cx="1108.10" cy="360.00" r="5.10" fill="#00a8f4"/>
<g filter="url(#shadow)">
<rect x="1056.80" y="478.00" width="113.20" height="31.70" rx="10" fill="rgba(0,0,0,0.22)" stroke="rgba(0,0,0,0.6)" stroke-width="1.2"/>
</g>
<clipPath id="c1056_478"><rect x="1056.80" y="478.00" width="113.20" height="31.70" rx="10"/></clipPath>
<mask id="m1056_478a" maskUnits="userSpaceOnUse" x="1056.8" y="478" width="113.20000000000005" height="31.69999999999999"><rect x="1056.80" y="478.00" width="113.20" height="31.70" fill="url(#hmaskA)"/></mask>
<mask id="m1056_478b" maskUnits="userSpaceOnUse" x="1056.8" y="478" width="113.20000000000005" height="31.69999999999999"><rect x="1056.80" y="478.00" width="113.20" height="31.70" fill="url(#hmaskB)"/></mask>
<g clip-path="url(#c1056_478)">
<rect x="1056.80" y="478.00" width="113.20" height="11.00" fill="url(#glossV)"/>
<rect x="1056.80" y="478.00" width="113.20" height="11.00" fill="url(#varBright)" fill-opacity="0.9" mask="url(#m1056_478a)"/>
<rect x="1056.80" y="489.00" width="113.20" height="12.00" fill="url(#varDark)" mask="url(#m1056_478b)"/>
<rect x="1056.80" y="488.40" width="113.20" height="1.2" fill="rgba(0,0,0,0.25)" mask="url(#m1056_478b)"/>
<path d="M1057.70,489.00 L1057.70,488.00 A9.1,9.1 0 0 1 1066.80,478.90 L1160.00,478.90 A9.1,9.1 0 0 1 1169.10,488.00 L1169.10,489.00" fill="none" stroke="rgba(215,215,215,0.38)" stroke-width="1.1"/>
</g>
<text x="1099.98" y="498.00" font-size="11.2" font-weight="normal" font-style="normal" fill="#f0f0f0" textLength="41.10" lengthAdjust="spacingAndGlyphs" stroke="#f0f0f0" stroke-width="0.25" >Session</text>
<path d="M1153.80,491.40 L1156.80,494.00 L1153.80,496.60 Z" fill="#00a8f4"/>
<circle cx="1149.20" cy="494.00" r="5.10" fill="#00a8f4"/>
<g filter="url(#shadow)">
<rect x="1322.50" y="295.70" width="250.80" height="136.30" rx="6" fill="rgba(13,15,13,0.74)" stroke="rgba(0,0,0,0.7)" stroke-width="1"/>
</g>
<clipPath id="h1322_295"><rect x="1322.50" y="295.70" width="250.80" height="136.30" rx="6"/></clipPath>
<g clip-path="url(#h1322_295)">
<rect x="1322.50" y="295.70" width="250.80" height="20.20" fill="url(#funcH)"/>
<rect x="1322.50" y="295.70" width="250.80" height="20.20" fill="url(#funcV)"/>
<ellipse cx="1460.44" cy="305.80" rx="125.40" ry="8.48" fill="url(#funcBlob)"/>
<rect x="1322.50" y="295.70" width="250.80" height="1.2" fill="rgba(150,200,230,0.35)"/>
</g>
<rect x="1331.4" y="299.5" width="13.1" height="12.2" fill="#9aacba" stroke="#f2f2f2" stroke-width="1"/>
<rect x="1331.4" y="299.5" width="13.1" height="4" fill="#f2f2f2"/>
<text x="1347.95" y="309.70" font-size="12.3" font-weight="bold" font-style="normal" fill="#d6d6d6" textLength="45.32" lengthAdjust="spacingAndGlyphs"  >Connect</text>
<path d="M1335.00,327.00 L1339.50,327.00 L1345.00,333.00 L1339.50,339.00 L1335.00,339.00 Q1334.00,339.00 1334.00,338.00 L1334.00,328.00 Q1334.00,327.00 1335.00,327.00 Z" fill="#ffffff"/>
<path d="M1551.55,327.75 L1556.40,327.75 L1561.10,333.00 L1556.40,338.25 L1551.55,338.25 Z" fill="none" stroke="#f0f0f0" stroke-width="1.4" stroke-linejoin="round"/>
<path d="M1343.40,357.50 L1346.40,360.10 L1343.40,362.70 Z" fill="#00a8f4"/>
<circle cx="1338.80" cy="360.10" r="5.10" fill="#00a8f4"/>
<text x="1351.59" y="364.20" font-size="11.2" font-weight="normal" font-style="normal" fill="#ececec" textLength="76.87" lengthAdjust="spacingAndGlyphs" stroke="#ececec" stroke-width="0.25" >Realtime Client</text>
<path d="M1343.40,384.60 L1346.40,387.20 L1343.40,389.80 Z" fill="#00a8f4"/>
<circle cx="1338.80" cy="387.20" r="5.10" fill="#00a8f4"/>
<text x="1351.99" y="391.30" font-size="11.2" font-weight="normal" font-style="normal" fill="#ececec" textLength="40.59" lengthAdjust="spacingAndGlyphs" stroke="#ececec" stroke-width="0.25" >Session</text>
<path d="M1343.40,412.50 L1346.40,415.10 L1343.40,417.70 Z" fill="#8a0b0b"/>
<circle cx="1338.80" cy="415.10" r="4.30" fill="#111" stroke="#8a0b0b" stroke-width="1.6"/>
<text x="1351.51" y="419.20" font-size="11.2" font-weight="normal" font-style="normal" fill="#ececec" textLength="89.19" lengthAdjust="spacingAndGlyphs" stroke="#ececec" stroke-width="0.25" >In Show as Online</text>
<rect x="1445.8" y="408.8" width="14.4" height="13.2" rx="1.5" fill="#151515" stroke="#3a3a3a" stroke-width="1"/>
<path d="M1449,415.5 L1452,418.5 L1457.5,412" fill="none" stroke="#1f7ee6" stroke-width="1.8"/>
<text x="1506.02" y="364.20" font-size="11.2" font-weight="normal" font-style="normal" fill="#ececec" textLength="40.78" lengthAdjust="spacingAndGlyphs" stroke="#ececec" stroke-width="0.25" >On Error</text>
<path d="M1552.00,355.00 L1556.50,355.00 L1562.00,361.00 L1556.50,367.00 L1552.00,367.00 Q1551.00,367.00 1551.00,366.00 L1551.00,356.00 Q1551.00,355.00 1552.00,355.00 Z" fill="#ffffff"/>
<text x="1486.80" y="392.50" font-size="11.2" font-weight="normal" font-style="normal" fill="#ececec" textLength="59.90" lengthAdjust="spacingAndGlyphs" stroke="#ececec" stroke-width="0.25" >On Success</text>
<path d="M1552.00,382.50 L1556.50,382.50 L1562.00,388.50 L1556.50,394.50 L1552.00,394.50 Q1551.00,394.50 1551.00,393.50 L1551.00,383.50 Q1551.00,382.50 1552.00,382.50 Z" fill="#ffffff"/>
<text x="1519.73" y="419.90" font-size="11.2" font-weight="normal" font-style="normal" fill="#ececec" textLength="24.05" lengthAdjust="spacingAndGlyphs" stroke="#ececec" stroke-width="0.25" >Error</text>
<path d="M1558.50,413.50 L1561.50,416.10 L1558.50,418.70 Z" fill="#0b5ad8"/>
<circle cx="1553.90" cy="416.10" r="5.10" fill="#0b5ad8"/>
<circle cx="1570.4" cy="296.5" r="10.5" fill="#ffffff"/>
<path d="M1570.4,289.6 L1570.4,296.5 L1575.6,296.5" fill="none" stroke="#2a2a2a" stroke-width="1.3"/>
<g filter="url(#shadow)">
<rect x="1785.40" y="156.00" width="237.90" height="130.70" rx="6" fill="rgba(13,15,13,0.74)" stroke="rgba(0,0,0,0.7)" stroke-width="1"/>
</g>
<clipPath id="h1785_156"><rect x="1785.40" y="156.00" width="237.90" height="130.70" rx="6"/></clipPath>
<g clip-path="url(#h1785_156)">
<rect x="1785.40" y="156.00" width="237.90" height="19.90" fill="url(#funcH)"/>
<rect x="1785.40" y="156.00" width="237.90" height="19.90" fill="url(#funcV)"/>
<ellipse cx="1916.25" cy="165.95" rx="118.95" ry="8.36" fill="url(#funcBlob)"/>
<rect x="1785.40" y="156.00" width="237.90" height="1.2" fill="rgba(150,200,230,0.35)"/>
</g>
<path d="M1803.76,162.25 C1801.56,160.87 1800.24,162.46 1799.80,165.11 L1798.48,170.41 C1798.04,172.21 1796.46,172.21 1795.40,170.94 M1797.60,165.85 L1802.44,165.85" fill="none" stroke="#6cb8ec" stroke-width="1.3" stroke-linecap="round"/>
<text x="1809.87" y="169.50" font-size="12.3" font-weight="bold" font-style="normal" fill="#d6d6d6" textLength="61.36" lengthAdjust="spacingAndGlyphs"  >Print String</text>
<path d="M1797.00,187.00 L1801.50,187.00 L1807.00,193.00 L1801.50,199.00 L1797.00,199.00 Q1796.00,199.00 1796.00,198.00 L1796.00,188.00 Q1796.00,187.00 1797.00,187.00 Z" fill="#ffffff"/>
<path d="M2001.55,187.75 L2005.95,187.75 L2010.20,193.00 L2005.95,198.25 L2001.55,198.25 Z" fill="none" stroke="#f0f0f0" stroke-width="1.4" stroke-linejoin="round"/>
<text x="1813.56" y="224.00" font-size="11.2" font-weight="normal" font-style="normal" fill="#ececec" textLength="43.19" lengthAdjust="spacingAndGlyphs" stroke="#ececec" stroke-width="0.25" >In String</text>
<path d="M1805.90,226.00 L1808.90,228.60 L1805.90,231.20 Z" fill="#ff00e0"/>
<circle cx="1801.30" cy="228.60" r="4.60" fill="#111" stroke="#ff00e0" stroke-width="1.6"/>
<rect x="1818.9" y="228" width="152.4" height="15.3" fill="none" stroke="#a8a8a8" stroke-width="1"/>
<text x="1821.74" y="238.90" font-size="12.4" font-weight="normal" font-style="normal" fill="#d8d8d8" textLength="145.67" lengthAdjust="spacingAndGlyphs"  >Realtime Client Connected!</text>
<clipPath id="s1785_254"><rect x="1785.80" y="254.00" width="236.60" height="16.90"/></clipPath>
<path clip-path="url(#s1785_254)" d="M1785.80,254.00 L1799.80,254.00 L1782.90,270.90 L1768.90,270.90 Z M1813.70,254.00 L1827.70,254.00 L1810.80,270.90 L1796.80,270.90 Z M1841.60,254.00 L1855.60,254.00 L1838.70,270.90 L1824.70,270.90 Z M1869.50,254.00 L1883.50,254.00 L1866.60,270.90 L1852.60,270.90 Z M1897.40,254.00 L1911.40,254.00 L1894.50,270.90 L1880.50,270.90 Z M1925.30,254.00 L1939.30,254.00 L1922.40,270.90 L1908.40,270.90 Z M1953.20,254.00 L1967.20,254.00 L1950.30,270.90 L1936.30,270.90 Z M1981.10,254.00 L1995.10,254.00 L1978.20,270.90 L1964.20,270.90 Z M2009.00,254.00 L2023.00,254.00 L2006.10,270.90 L1992.10,270.90 Z M2036.90,254.00 L2050.90,254.00 L2034.00,270.90 L2020.00,270.90 Z" fill="#5c5c14"/>
<text x="1855.36" y="267.60" font-size="12.6" font-weight="normal" font-style="normal" fill="rgba(0,0,0,0.75)" textLength="97.06" lengthAdjust="spacingAndGlyphs"  >Development Only</text>
<text x="1854.56" y="266.80" font-size="12.6" font-weight="normal" font-style="normal" fill="#f4f4f4" textLength="97.06" lengthAdjust="spacingAndGlyphs"  >Development Only</text>
<path d="M1901.00,275.70 L1905.00,280.40 L1909.00,275.70" fill="none" stroke="#f4f4f4" stroke-width="2"/>
<g filter="url(#shadow)">
<rect x="2177.50" y="324.30" width="126.00" height="112.70" rx="6" fill="rgba(13,15,13,0.74)" stroke="rgba(0,0,0,0.7)" stroke-width="1"/>
</g>
<clipPath id="h2177_324"><rect x="2177.50" y="324.30" width="126.00" height="112.70" rx="6"/></clipPath>
<g clip-path="url(#h2177_324)">
<rect x="2177.50" y="324.30" width="126.00" height="19.30" fill="url(#funcH)"/>
<rect x="2177.50" y="324.30" width="126.00" height="19.30" fill="url(#funcV)"/>
<ellipse cx="2246.80" cy="333.95" rx="63.00" ry="8.11" fill="url(#funcBlob)"/>
<rect x="2177.50" y="324.30" width="126.00" height="1.2" fill="rgba(150,200,230,0.35)"/>
</g>
<path d="M2195.49,330.25 C2193.44,328.87 2192.21,330.46 2191.80,333.11 L2190.57,338.41 C2190.16,340.21 2188.68,340.21 2187.70,338.94 M2189.75,333.85 L2194.26,333.85" fill="none" stroke="#6cb8ec" stroke-width="1.3" stroke-linecap="round"/>
<text x="2201.67" y="337.60" font-size="12.3" font-weight="bold" font-style="normal" fill="#d6d6d6" textLength="61.15" lengthAdjust="spacingAndGlyphs"  >Print String</text>
<path d="M2189.20,355.00 L2193.60,355.00 L2199.00,361.00 L2193.60,367.00 L2189.20,367.00 Q2188.20,367.00 2188.20,366.00 L2188.20,356.00 Q2188.20,355.00 2189.20,355.00 Z" fill="#ffffff"/>
<path d="M2282.05,355.75 L2286.25,355.75 L2290.30,361.00 L2286.25,366.25 L2282.05,366.25 Z" fill="none" stroke="#f0f0f0" stroke-width="1.4" stroke-linejoin="round"/>
<path d="M2197.40,385.40 L2200.40,388.00 L2197.40,390.60 Z" fill="#ff00e0"/>
<circle cx="2192.80" cy="388.00" r="5.10" fill="#ff00e0"/>
<text x="2205.45" y="392.60" font-size="11.2" font-weight="normal" font-style="normal" fill="#ececec" textLength="43.29" lengthAdjust="spacingAndGlyphs" stroke="#ececec" stroke-width="0.25" >In String</text>
<clipPath id="s2177_404"><rect x="2177.90" y="404.00" width="124.10" height="17.90"/></clipPath>
<path clip-path="url(#s2177_404)" d="M2177.90,404.00 L2191.90,404.00 L2174.00,421.90 L2160.00,421.90 Z M2205.80,404.00 L2219.80,404.00 L2201.90,421.90 L2187.90,421.90 Z M2233.70,404.00 L2247.70,404.00 L2229.80,421.90 L2215.80,421.90 Z M2261.60,404.00 L2275.60,404.00 L2257.70,421.90 L2243.70,421.90 Z M2289.50,404.00 L2303.50,404.00 L2285.60,421.90 L2271.60,421.90 Z M2317.40,404.00 L2331.40,404.00 L2313.50,421.90 L2299.50,421.90 Z" fill="#5c5c14"/>
<text x="2191.45" y="417.80" font-size="12.6" font-weight="normal" font-style="normal" fill="rgba(0,0,0,0.75)" textLength="97.46" lengthAdjust="spacingAndGlyphs"  >Development Only</text>
<text x="2190.65" y="417.00" font-size="12.6" font-weight="normal" font-style="normal" fill="#f4f4f4" textLength="97.46" lengthAdjust="spacingAndGlyphs"  >Development Only</text>
<path d="M2236.90,426.70 L2241.15,431.80 L2245.40,426.70" fill="none" stroke="#f4f4f4" stroke-width="2"/>
<g filter="url(#shadow)">
<rect x="1785.30" y="478.40" width="211.30" height="105.80" rx="6" fill="rgba(13,15,13,0.74)" stroke="rgba(0,0,0,0.7)" stroke-width="1"/>
</g>
<clipPath id="h1785_478"><rect x="1785.30" y="478.40" width="211.30" height="105.80" rx="6"/></clipPath>
<g clip-path="url(#h1785_478)">
<rect x="1785.30" y="478.40" width="211.30" height="19.40" fill="url(#breakH)"/>
<rect x="1785.30" y="478.40" width="211.30" height="19.40" fill="url(#funcV)"/>
<ellipse cx="1901.51" cy="488.10" rx="105.65" ry="8.15" fill="url(#funcBlob)"/>
<rect x="1785.30" y="478.40" width="211.30" height="1.2" fill="rgba(150,200,230,0.35)"/>
</g>
<rect x="1793.9" y="486.1" width="7.8" height="3.9" rx="1.9" fill="#ffffff"/>
<path d="M1802.4,484.7 L1804.9,482.5 M1802.4,491.6 L1804.9,493.9" stroke="#ffffff" stroke-width="1.3" stroke-linecap="round"/>
<text x="1809.89" y="491.80" font-size="12.3" font-weight="bold" font-style="normal" fill="#d6d6d6" textLength="112.86" lengthAdjust="spacingAndGlyphs"  >Break NakamaRtError</text>
<path d="M1805.90,511.40 L1808.90,514.00 L1805.90,516.60 Z" fill="#0b5ad8"/>
<circle cx="1801.30" cy="514.00" r="5.10" fill="#0b5ad8"/>
<text x="1813.71" y="517.70" font-size="11.2" font-weight="normal" font-style="normal" fill="#ececec" textLength="83.07" lengthAdjust="spacingAndGlyphs" stroke="#ececec" stroke-width="0.25" >Nakama Rt Error</text>
<text x="1920.49" y="518.00" font-size="11.2" font-weight="normal" font-style="normal" fill="#ececec" textLength="46.26" lengthAdjust="spacingAndGlyphs" stroke="#ececec" stroke-width="0.25" >Message</text>
<path d="M1980.50,511.30 L1983.50,513.90 L1980.50,516.50 Z" fill="#ff00e0"/>
<circle cx="1975.90" cy="513.90" r="5.10" fill="#ff00e0"/>
<text x="1942.09" y="545.00" font-size="11.2" font-weight="normal" font-style="normal" fill="#ececec" textLength="24.58" lengthAdjust="spacingAndGlyphs" stroke="#ececec" stroke-width="0.25" >Code</text>
<path d="M1980.50,538.30 L1983.50,540.90 L1980.50,543.50 Z" fill="#0a6e68"/>
<circle cx="1975.90" cy="540.90" r="4.30" fill="#111" stroke="#0a6e68" stroke-width="1.6"/>
<text x="1927.14" y="572.00" font-size="11.2" font-weight="normal" font-style="normal" fill="#ececec" textLength="38.43" lengthAdjust="spacingAndGlyphs" stroke="#ececec" stroke-width="0.25" >Context</text>
<rect x="1970.9" y="561.9" width="4" height="4.30" fill="#ff00e0"/>
<rect x="1976.2" y="561.9" width="8.9" height="4.30" fill="#ff00e0"/>
<rect x="1970.9" y="566.9" width="4" height="4.30" fill="#ff00e0"/>
<rect x="1976.2" y="566.9" width="8.9" height="4.30" fill="#ff00e0"/>
<rect x="1970.9" y="571.9" width="4" height="4.20" fill="#ff00e0"/>
<rect x="1976.2" y="571.9" width="8.9" height="4.20" fill="#ff00e0"/>
<g>
<path d="M193.60,300.90 L198.60,307.40 L203.60,300.90 Z" fill="#e8e8e8"/>
<rect x="189.00" y="275.90" width="250.80" height="25.10" rx="3.5" fill="url(#bubG)" stroke="#fafafa" stroke-width="1.8"/>
<rect x="191.00" y="278.20" width="233.30" height="20.20" rx="10.10" fill="url(#pillG)" stroke="#353535" stroke-width="1.1"/>
<text x="198.73" y="291.90" font-size="12.6" font-weight="normal" font-style="normal" fill="#161616" textLength="218.81" lengthAdjust="spacingAndGlyphs"  >Promote Session to variable for later use</text>
<path d="M430.00,282.15 L432.20,282.15" stroke="#6e6e6e" stroke-width="1"/>
<path d="M432.00,282.15 C432.00,279.95 434.70,279.95 435.30,280.95 L436.30,280.95 L436.30,279.85 L437.90,279.85 L437.90,284.45 L436.30,284.45 L436.30,283.35 L435.30,283.35 C434.70,284.35 432.00,284.35 432.00,282.15 Z" fill="#6e6e6e"/>
<rect x="430.00" y="289.00" width="8.3" height="6.5" fill="#c2ccd4"/>
<rect x="430.00" y="295.00" width="8.3" height="0.8" fill="#8c9aa6"/>
<path d="M430.90,293.00 h6" stroke="#4a5662" stroke-width="1.1" stroke-dasharray="1.3 0.8"/>
</g>
<g>
<path d="M375.80,174.60 L380.80,181.10 L385.80,174.60 Z" fill="#e8e8e8"/>
<rect x="371.20" y="150.10" width="175.60" height="24.60" rx="3.5" fill="url(#bubG)" stroke="#fafafa" stroke-width="1.8"/>
<rect x="373.10" y="152.40" width="158.70" height="19.70" rx="9.85" fill="url(#pillG)" stroke="#353535" stroke-width="1.1"/>
<text x="380.85" y="166.00" font-size="12.6" font-weight="normal" font-style="normal" fill="#161616" textLength="143.03" lengthAdjust="spacingAndGlyphs"  >Reference to Default Client</text>
<path d="M537.00,156.35 L539.20,156.35" stroke="#6e6e6e" stroke-width="1"/>
<path d="M539.00,156.35 C539.00,154.15 541.70,154.15 542.30,155.15 L543.30,155.15 L543.30,154.05 L544.90,154.05 L544.90,158.65 L543.30,158.65 L543.30,157.55 L542.30,157.55 C541.70,158.55 539.00,158.55 539.00,156.35 Z" fill="#6e6e6e"/>
<rect x="537.00" y="163.20" width="8.3" height="6.5" fill="#c2ccd4"/>
<rect x="537.00" y="169.20" width="8.3" height="0.8" fill="#8c9aa6"/>
<path d="M537.90,167.20 h6" stroke="#4a5662" stroke-width="1.1" stroke-dasharray="1.3 0.8"/>
</g>
<g>
<path d="M641.75,272.75 L646.75,279.25 L651.75,272.75 Z" fill="#e8e8e8"/>
<rect x="637.15" y="248.10" width="132.85" height="24.75" rx="3.5" fill="url(#bubG)" stroke="#fafafa" stroke-width="1.8"/>
<rect x="639.00" y="250.40" width="115.70" height="19.85" rx="9.93" fill="url(#pillG)" stroke="#353535" stroke-width="1.1"/>
<text x="646.91" y="263.75" font-size="12.6" font-weight="normal" font-style="normal" fill="#161616" textLength="100.10" lengthAdjust="spacingAndGlyphs"  >Creates the Socket</text>
<path d="M760.20,254.35 L762.40,254.35" stroke="#6e6e6e" stroke-width="1"/>
<path d="M762.20,254.35 C762.20,252.15 764.90,252.15 765.50,253.15 L766.50,253.15 L766.50,252.05 L768.10,252.05 L768.10,256.65 L766.50,256.65 L766.50,255.55 L765.50,255.55 C764.90,256.55 762.20,256.55 762.20,254.35 Z" fill="#6e6e6e"/>
<rect x="760.20" y="261.20" width="8.3" height="6.5" fill="#c2ccd4"/>
<rect x="760.20" y="267.20" width="8.3" height="0.8" fill="#8c9aa6"/>
<path d="M761.10,265.20 h6" stroke="#4a5662" stroke-width="1.1" stroke-dasharray="1.3 0.8"/>
</g>
<g>
<path d="M963.70,300.70 L968.70,307.20 L973.70,300.70 Z" fill="#e8e8e8"/>
<rect x="959.10" y="275.90" width="206.00" height="24.90" rx="3.5" fill="url(#bubG)" stroke="#fafafa" stroke-width="1.8"/>
<rect x="961.00" y="278.20" width="188.60" height="20.00" rx="10.00" fill="url(#pillG)" stroke="#353535" stroke-width="1.1"/>
<text x="968.72" y="291.80" font-size="12.6" font-weight="normal" font-style="normal" fill="#161616" textLength="173.92" lengthAdjust="spacingAndGlyphs"  >Promote to variable for later use</text>
<path d="M1155.30,282.15 L1157.50,282.15" stroke="#6e6e6e" stroke-width="1"/>
<path d="M1157.30,282.15 C1157.30,279.95 1160.00,279.95 1160.60,280.95 L1161.60,280.95 L1161.60,279.85 L1163.20,279.85 L1163.20,284.45 L1161.60,284.45 L1161.60,283.35 L1160.60,283.35 C1160.00,284.35 1157.30,284.35 1157.30,282.15 Z" fill="#6e6e6e"/>
<rect x="1155.30" y="289.00" width="8.3" height="6.5" fill="#c2ccd4"/>
<rect x="1155.30" y="295.00" width="8.3" height="0.8" fill="#8c9aa6"/>
<path d="M1156.20,293.00 h6" stroke="#4a5662" stroke-width="1.1" stroke-dasharray="1.3 0.8"/>
</g>
<g>
<path d="M1327.60,286.60 L1332.60,293.10 L1337.60,286.60 Z" fill="#e8e8e8"/>
<rect x="1323.00" y="262.10" width="172.10" height="24.60" rx="3.5" fill="url(#bubG)" stroke="#fafafa" stroke-width="1.8"/>
<rect x="1325.10" y="264.40" width="154.70" height="19.70" rx="9.85" fill="url(#pillG)" stroke="#353535" stroke-width="1.1"/>
<text x="1332.64" y="278.00" font-size="12.6" font-weight="normal" font-style="normal" fill="#161616" textLength="139.24" lengthAdjust="spacingAndGlyphs"  >Remember to call connect</text>
<path d="M1485.30,268.35 L1487.50,268.35" stroke="#6e6e6e" stroke-width="1"/>
<path d="M1487.30,268.35 C1487.30,266.15 1490.00,266.15 1490.60,267.15 L1491.60,267.15 L1491.60,266.05 L1493.20,266.05 L1493.20,270.65 L1491.60,270.65 L1491.60,269.55 L1490.60,269.55 C1490.00,270.55 1487.30,270.55 1487.30,268.35 Z" fill="#6e6e6e"/>
<rect x="1485.30" y="275.20" width="8.3" height="6.5" fill="#c2ccd4"/>
<rect x="1485.30" y="281.20" width="8.3" height="0.8" fill="#8c9aa6"/>
<path d="M1486.20,279.20 h6" stroke="#4a5662" stroke-width="1.1" stroke-dasharray="1.3 0.8"/>
</g>
<g>
<path d="M1061.75,468.70 L1066.75,475.20 L1071.75,468.70 Z" fill="#e8e8e8"/>
<rect x="1057.15" y="444.15" width="185.95" height="24.65" rx="3.5" fill="url(#bubG)" stroke="#fafafa" stroke-width="1.8"/>
<rect x="1059.00" y="446.45" width="168.90" height="19.75" rx="9.88" fill="url(#pillG)" stroke="#353535" stroke-width="1.1"/>
<text x="1066.94" y="460.00" font-size="12.6" font-weight="normal" font-style="normal" fill="#161616" textLength="153.48" lengthAdjust="spacingAndGlyphs"  >Session from Authentication</text>
<clipPath id="bc1056"><rect x="1056.75" y="443.75" width="186.75" height="25.45" rx="4"/></clipPath>
<path clip-path="url(#bc1056)" d="M1149.20,494.00 C1248.00,494.00 1240.00,387.20 1338.80,387.20" fill="none" stroke="#c6ecfb" stroke-opacity="0.85" stroke-width="2"/>
<path d="M1233.30,450.40 L1235.50,450.40" stroke="#6e6e6e" stroke-width="1"/>
<path d="M1235.30,450.40 C1235.30,448.20 1238.00,448.20 1238.60,449.20 L1239.60,449.20 L1239.60,448.10 L1241.20,448.10 L1241.20,452.70 L1239.60,452.70 L1239.60,451.60 L1238.60,451.60 C1238.00,452.60 1235.30,452.60 1235.30,450.40 Z" fill="#6e6e6e"/>
<rect x="1233.30" y="457.25" width="8.3" height="6.5" fill="#c2ccd4"/>
<rect x="1233.30" y="463.25" width="8.3" height="0.8" fill="#8c9aa6"/>
<path d="M1234.20,461.25 h6" stroke="#4a5662" stroke-width="1.1" stroke-dasharray="1.3 0.8"/>
</g>
<g>
<path d="M1789.75,146.80 L1794.75,153.30 L1799.75,146.80 Z" fill="#e8e8e8"/>
<rect x="1785.15" y="122.00" width="129.95" height="24.90" rx="3.5" fill="url(#bubG)" stroke="#fafafa" stroke-width="1.8"/>
<rect x="1787.00" y="124.30" width="112.90" height="20.00" rx="10.00" fill="url(#pillG)" stroke="#353535" stroke-width="1.1"/>
<text x="1795.27" y="137.90" font-size="12.6" font-weight="normal" font-style="normal" fill="#161616" textLength="96.78" lengthAdjust="spacingAndGlyphs"  >Socket Connected</text>
<path d="M1905.30,128.25 L1907.50,128.25" stroke="#6e6e6e" stroke-width="1"/>
<path d="M1907.30,128.25 C1907.30,126.05 1910.00,126.05 1910.60,127.05 L1911.60,127.05 L1911.60,125.95 L1913.20,125.95 L1913.20,130.55 L1911.60,130.55 L1911.60,129.45 L1910.60,129.45 C1910.00,130.45 1907.30,130.45 1907.30,128.25 Z" fill="#6e6e6e"/>
<rect x="1905.30" y="135.10" width="8.3" height="6.5" fill="#c2ccd4"/>
<rect x="1905.30" y="141.10" width="8.3" height="0.8" fill="#8c9aa6"/>
<path d="M1906.20,139.10 h6" stroke="#4a5662" stroke-width="1.1" stroke-dasharray="1.3 0.8"/>
</g>
<g>
<path d="M2181.70,314.90 L2186.70,321.40 L2191.70,314.90 Z" fill="#e8e8e8"/>
<rect x="2177.10" y="290.10" width="152.90" height="24.90" rx="3.5" fill="url(#bubG)" stroke="#fafafa" stroke-width="1.8"/>
<rect x="2179.20" y="292.40" width="135.20" height="20.00" rx="10.00" fill="url(#pillG)" stroke="#353535" stroke-width="1.1"/>
<text x="2186.73" y="306.00" font-size="12.6" font-weight="normal" font-style="normal" fill="#161616" textLength="120.30" lengthAdjust="spacingAndGlyphs"  >Print Connection Error</text>
<path d="M2320.20,296.35 L2322.40,296.35" stroke="#6e6e6e" stroke-width="1"/>
<path d="M2322.20,296.35 C2322.20,294.15 2324.90,294.15 2325.50,295.15 L2326.50,295.15 L2326.50,294.05 L2328.10,294.05 L2328.10,298.65 L2326.50,298.65 L2326.50,297.55 L2325.50,297.55 C2324.90,298.55 2322.20,298.55 2322.20,296.35 Z" fill="#6e6e6e"/>
<rect x="2320.20" y="303.20" width="8.3" height="6.5" fill="#c2ccd4"/>
<rect x="2320.20" y="309.20" width="8.3" height="0.8" fill="#8c9aa6"/>
<path d="M2321.10,307.20 h6" stroke="#4a5662" stroke-width="1.1" stroke-dasharray="1.3 0.8"/>
</g>
</svg></body></html>
